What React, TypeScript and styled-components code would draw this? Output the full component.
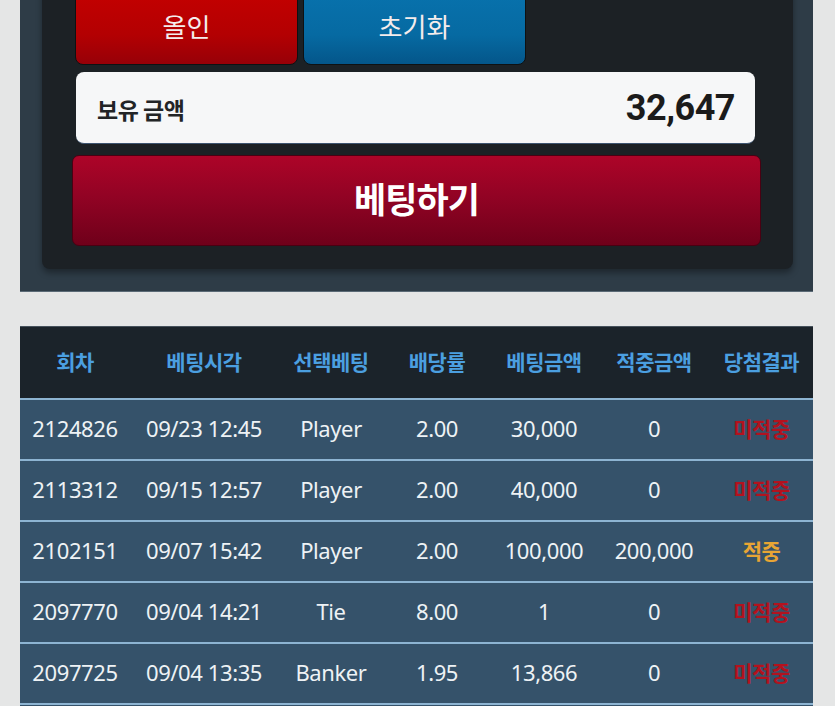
import styled, { createGlobalStyle } from "styled-components";

const GlobalStyle = createGlobalStyle`
* { box-sizing: border-box; }
html, body {
    margin: 0;
    padding: 0;
    background: #e5e6e6;
    overflow: hidden;
}
body {
    font-family: "Noto Sans CJK KR", "Noto Sans", sans-serif;
}
`;

type Result = "win" | "lose";

interface IBetRow {
    round: string;
    time: string;
    pick: string;
    odds: string;
    amount: string;
    payout: string;
    result: Result;
}

const headers = ["회차", "베팅시각", "선택베팅", "배당률", "베팅금액", "적중금액", "당첨결과"];

const rows: IBetRow[] = [
    { round: "2124826", time: "09/23 12:45", pick: "Player", odds: "2.00", amount: "30,000", payout: "0", result: "lose" },
    { round: "2113312", time: "09/15 12:57", pick: "Player", odds: "2.00", amount: "40,000", payout: "0", result: "lose" },
    { round: "2102151", time: "09/07 15:42", pick: "Player", odds: "2.00", amount: "100,000", payout: "200,000", result: "win" },
    { round: "2097770", time: "09/04 14:21", pick: "Tie", odds: "8.00", amount: "1", payout: "0", result: "lose" },
    { round: "2097725", time: "09/04 13:35", pick: "Banker", odds: "1.95", amount: "13,866", payout: "0", result: "lose" },
];

export default function App() {
    return (
        <>
            <GlobalStyle />
            <Page>
                <BetPanel>
                    <BetCard>
                        <QuickRow>
                            <QuickButton $tone="red">올인</QuickButton>
                            <QuickButton $tone="blue">초기화</QuickButton>
                        </QuickRow>
                        <Balance>
                            <BalanceLabel>보유 금액</BalanceLabel>
                            <BalanceValue>32,647</BalanceValue>
                        </Balance>
                        <BetButton>베팅하기</BetButton>
                    </BetCard>
                </BetPanel>

                <History>
                    <HeadRow>
                        {headers.map((h) => (
                            <HeadCell key={h}>{h}</HeadCell>
                        ))}
                    </HeadRow>
                    {rows.map((r) => (
                        <BodyRow key={r.round}>
                            <Cell>{r.round}</Cell>
                            <Cell>{r.time}</Cell>
                            <Cell>{r.pick}</Cell>
                            <Cell>{r.odds}</Cell>
                            <Cell>{r.amount}</Cell>
                            <Cell>{r.payout}</Cell>
                            <ResultCell $result={r.result}>{r.result === "win" ? "적중" : "미적중"}</ResultCell>
                        </BodyRow>
                    ))}
                    <TableTail />
                </History>
            </Page>
        </>
    );
}

const Page = styled("div")`
display: flex;
flex-direction: column;
row-gap: 34px;
margin-top: -52px;
padding: 0 22px 0 20px;
`;

const BetPanel = styled("section")`
background: #2e3c47;
padding: 22px 20px 22px 22px;
border-bottom: 1px solid #5b6a76;
`;

const BetCard = styled("div")`
display: flex;
flex-direction: column;
background: #1c2125;
border-radius: 8px;
padding: 20px 32px 23px 30px;
box-shadow: 0 4px 6px rgba(0, 0, 0, 0.35);
`;

const QuickRow = styled("div")`
display: flex;
column-gap: 5px;
margin-left: 3px;
`;

const QuickButton = styled("button")<{ $tone: "red" | "blue" }>`
width: 223px;
height: 75px;
border: 1px solid #0e1113;
border-radius: 8px;
background: ${(p) =>
    p.$tone === "red"
        ? "linear-gradient(to bottom, #c40000 0%, #b30002 60%, #970008 100%)"
        : "linear-gradient(to bottom, #0872ad 0%, #066aa2 60%, #04568a 100%)"};
color: #f4ecec;
font-family: "Noto Sans CJK KR", sans-serif;
font-size: 26px;
font-weight: 400;
padding: 0 0 4px;
`;

const Balance = styled("div")`
display: flex;
align-items: center;
justify-content: space-between;
height: 72px;
margin: 7px 6px 0 4px;
padding: 0 20px 0 21px;
background: #f6f7f8;
border-radius: 8px;
border-bottom: 1px solid #3d5470;
`;

const BalanceLabel = styled("span")`
font-family: "Noto Sans CJK KR", sans-serif;
font-size: 23px;
font-weight: 700;
letter-spacing: -0.5px;
color: #222426;
padding-top: 2px;
`;

const BalanceValue = styled("span")`
font-family: Roboto, "Noto Sans", sans-serif;
font-size: 36px;
font-weight: 700;
letter-spacing: -0.5px;
color: #1b1b1b;
`;

const BetButton = styled("button")`
height: 91px;
margin-top: 11px;
border: 1px solid #4a0012;
border-radius: 7px;
background: linear-gradient(to bottom, #ad0428 0%, #920324 45%, #6f001a 100%);
color: #ffffff;
font-family: "Noto Sans CJK KR", sans-serif;
font-size: 35px;
font-weight: 700;
letter-spacing: -1px;
padding: 0 0 6px;
`;

const History = styled("section")`
display: flex;
flex-direction: column;
background: #35526a;
`;

const columns = "110px 148px 106px 106px 108px 112px 1fr";

const HeadRow = styled("div")`
display: grid;
grid-template-columns: ${columns};
align-items: center;
height: 72px;
background: #1b232a;
border-top: 1px solid #46525c;
`;

const HeadCell = styled("div")`
text-align: center;
font-family: "Noto Sans CJK KR", sans-serif;
font-size: 21px;
font-weight: 700;
letter-spacing: -0.5px;
color: #4b9fe0;
padding-bottom: 4px;
`;

const BodyRow = styled("div")`
display: grid;
grid-template-columns: ${columns};
align-items: center;
height: 61px;
border-top: 2px solid #8db4d2;
`;

const Cell = styled("div")`
text-align: center;
font-family: "Noto Sans", "Noto Sans CJK KR", sans-serif;
font-size: 22px;
color: #eef2f5;
white-space: nowrap;
letter-spacing: -0.4px;
padding-bottom: 3px;
`;

const ResultCell = styled(Cell)<{ $result: Result }>`
font-family: "Noto Sans CJK KR", sans-serif;
font-size: 21px;
font-weight: 700;
letter-spacing: -0.5px;
color: ${(p) => (p.$result === "win" ? "#e8a534" : "#b3121e")};
`;

const TableTail = styled("div")`
height: 20px;
border-top: 2px solid #8db4d2;
`;
